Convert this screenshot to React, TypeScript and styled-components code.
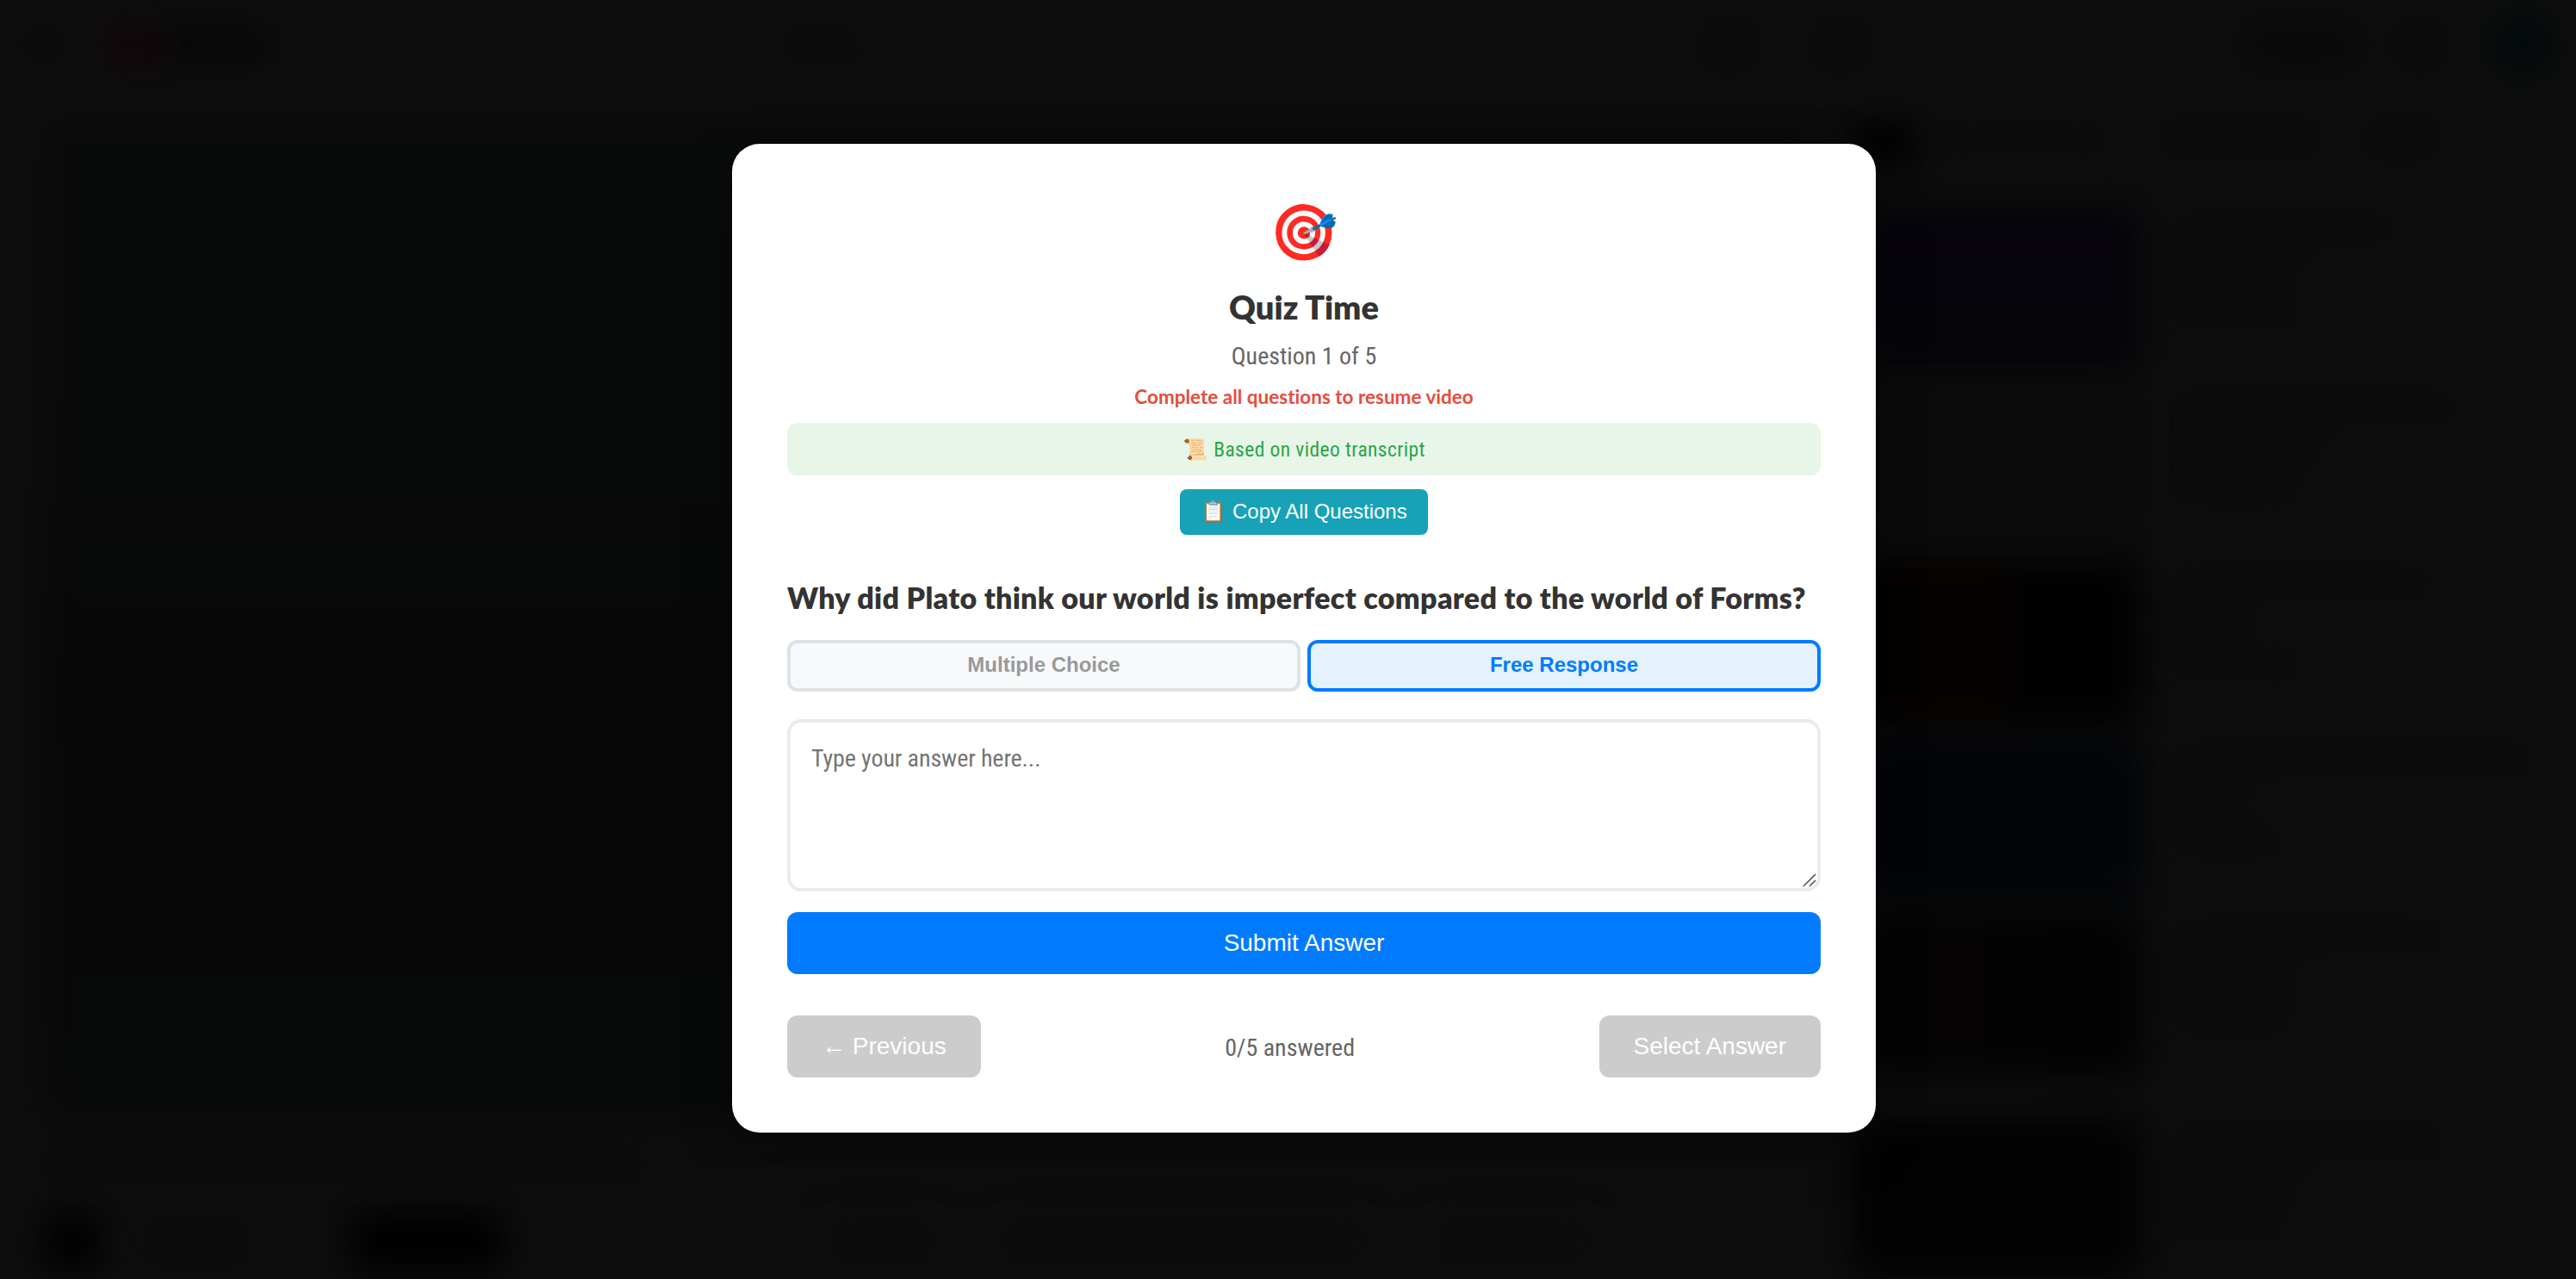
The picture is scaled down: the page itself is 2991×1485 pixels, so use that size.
import React, { useState } from 'react';
import styled, { createGlobalStyle, css } from 'styled-components';

const GlobalStyle = createGlobalStyle`
  *, *::before, *::after {
    box-sizing: border-box;
  }

  body {
    background: #0d0d0d;
    font-family: Lato, 'Open Sans', sans-serif;
    font-variant-ligatures: none;
    margin: 0;
    overflow: hidden;
  }
`;

const lightText = css`
  font-family: Roboto, 'Open Sans', sans-serif;
  font-stretch: 75%;
  font-weight: 400;
`;

const Stage = styled.div`
  display: grid;
  height: 100vh;
  overflow: hidden;
  width: 100vw;

  > * {
    grid-area: 1 / 1;
    min-height: 0;
    min-width: 0;
  }
`;

/* The dimmed video page behind the modal */

const Page = styled.div`
  display: flex;
  filter: blur(20px);
  flex-direction: column;
  overflow: hidden;
`;

const TopBar = styled.div`
  align-items: center;
  display: flex;
  flex: none;
  height: 104px;
  padding: 0 30px;
`;

const Blob = styled.div<{ $w: number; $h: number; $color: string; $left?: string; $round?: boolean }>`
  background: ${({ $color }) => $color};
  border-radius: ${({ $round }) => ($round ? '50%' : '12px')};
  flex: none;
  height: ${({ $h }) => $h}px;
  margin-left: ${({ $left }) => $left || '0'};
  width: ${({ $w }) => $w}px;
`;

const Watch = styled.div`
  display: flex;
  flex: 1;
  gap: 40px;
  padding-left: 48px;
`;

const Primary = styled.div`
  flex: none;
  width: 2062px;
`;

const Video = styled.div`
  background: linear-gradient(#090b0a 0%, #090a0a 35%, #080808 55%, #080909 100%);
  border-radius: 24px;
  height: 1160px;
  margin: 36px 0 38px;
`;

const ChannelRow = styled.div`
  align-items: center;
  display: flex;
  margin-top: 40px;
`;

const Secondary = styled.div`
  flex: 1;
  padding-top: 40px;
`;

const Chips = styled.div`
  display: flex;
  gap: 24px;
  margin-bottom: 52px;
`;

const Related = styled.div`
  display: flex;
  gap: 36px;
  margin-bottom: 16px;

  &:last-child {
    padding-top: 34px;
  }
`;

const Thumb = styled.div<{ $fill: string }>`
  background: ${({ $fill }) => $fill};
  border-radius: 16px;
  height: 189px;
  width: 336px;
`;

const Lines = styled.div`
  display: flex;
  flex-direction: column;
  gap: 24px;
  padding-top: 14px;
`;

/* Modal */

const Overlay = styled.div`
  align-items: center;
  display: flex;
  justify-content: center;
  padding: 0 0 3px 37px;
  z-index: 1;
`;

const Modal = styled.div`
  background: #fff;
  border-radius: 32px;
  box-shadow: 0 20px 60px rgba(0, 0, 0, 0.3);
  display: flex;
  flex-direction: column;
  height: 1148px;
  padding: 64px;
  width: 1328px;
`;

const Header = styled.div`
  align-items: center;
  display: flex;
  flex-direction: column;
  margin-bottom: 39px;
`;

const HeaderIcon = styled.div`
  font-size: 64px;
  height: 89px;
  line-height: 74px;
`;

const Title = styled.h2`
  color: #333;
  font-size: 38px;
  font-weight: 800;
  line-height: 72px;
  margin: 0;
`;

const Counter = styled.div`
  ${lightText}
  color: #666;
  font-size: 28px;
  line-height: 44px;
`;

const Notice = styled.div`
  color: #e74c3c;
  font-size: 22.5px;
  font-weight: 700;
  line-height: 50px;
`;

const SourceBanner = styled.div`
  background: #e8f5e9;
  border-radius: 12px;
  color: #28a745;
  font-size: 24px;
  height: 61px;
  line-height: 60px;
  margin: 5px 0 16px;
  text-align: center;
  width: 100%;
`;

const SourceText = styled.span`
  ${lightText}
  font-size: 23.5px;
  letter-spacing: 0.4px;
`;

const BaseButton = styled.button`
  border: none;
  color: #fff;
  cursor: pointer;
  font-family: 'Liberation Sans', Arial, sans-serif;
  padding: 0;
`;

const CopyButton = styled(BaseButton)`
  background: #17a2b8;
  border-radius: 8px;
  font-size: 24px;
  height: 53px;
  padding-bottom: 1px;
  width: 288px;
`;

const Question = styled.h3`
  color: #333;
  font-size: 34px;
  font-weight: 800;
  letter-spacing: 0.31px;
  line-height: 68px;
  margin: 0 0 15px;
  white-space: nowrap;
`;

const Modes = styled.div`
  display: flex;
  gap: 8px;
  margin-bottom: 32px;
`;

const ModeButton = styled(BaseButton)<{ $active: boolean }>`
  background: ${({ $active }) => ($active ? '#e3f2fd' : '#f8f9fa')};
  border: 4px solid ${({ $active }) => ($active ? '#007bff' : '#dee2e6')};
  border-radius: 12px;
  color: ${({ $active }) => ($active ? '#007bff' : '#999')};
  flex: 1;
  font-size: 24px;
  font-weight: 700;
  height: 60px;
  padding-bottom: 2px;
`;

const AnswerField = styled.div`
  display: flex;
  margin-bottom: 24px;
  position: relative;
`;

const Answer = styled.textarea`
  ${lightText}
  border: 4px solid #e9ecef;
  border-radius: 16px;
  font-size: 28px;
  height: 200px;
  letter-spacing: -0.1px;
  line-height: 40px;
  outline: none;
  padding: 22px 24px;
  resize: none;
  width: 100%;

  &::placeholder {
    color: #757575;
  }
`;

const Grip = styled.svg`
  bottom: 5px;
  position: absolute;
  right: 5px;
`;

const SubmitButton = styled(BaseButton)`
  background: #007bff;
  border-radius: 12px;
  font-size: 28px;
  height: 72px;
  margin-bottom: 48px;
`;

const Footer = styled.div`
  align-items: center;
  display: flex;
  justify-content: space-between;
`;

const NavButton = styled(BaseButton)`
  background: #ccc;
  border-radius: 12px;
  cursor: not-allowed;
  font-size: 28px;
  height: 72px;
  padding: 0 40px;
`;

const Progress = styled.div`
  ${lightText}
  color: #666;
  font-size: 28px;
  padding-top: 2px;
`;

const related = [
  { fill: 'linear-gradient(#06040b, #050409)', lines: [260, 150, 150] },
  { fill: '#0b0b0b', lines: [330, 180, 150] },
  { fill: 'linear-gradient(90deg, #010101, #060200 35%, #010101 70%)', lines: [300, 90, 150] },
  { fill: '#020408', lines: [420, 90, 130] },
  { fill: 'linear-gradient(90deg, #030303, #050303 35%, #020202)', lines: [320, 140, 140] },
  { fill: '#020202', lines: [320, 150, 130] },
];

const BackgroundPage: React.FC = () => (
  <Page>
    <TopBar>
      <Blob $w={40} $h={36} $color="#0a0a0a" />
      <Blob $w={62} $h={40} $color="#130307" $left="56px" />
      <Blob $w={115} $h={34} $color="#060606" $left="6px" />
      <Blob $w={90} $h={28} $color="#0a0a0a" $left="600px" />
      <Blob $w={46} $h={46} $color="#080808" $left="985px" $round />
      <Blob $w={46} $h={46} $color="#080808" $left="84px" $round />
      <Blob $w={130} $h={38} $color="#080808" $left="auto" />
      <Blob $w={44} $h={44} $color="#080808" $left="48px" $round />
      <Blob $w={64} $h={64} $color="#01090a" $left="68px" $round />
    </TopBar>
    <Watch>
      <Primary>
        <Video />
        <Blob $w={700} $h={28} $color="#0a0a0a" />
        <ChannelRow>
          <Blob $w={72} $h={72} $color="#000" $round />
          <Blob $w={120} $h={40} $color="#0a0a0a" $left="48px" />
          <Blob $w={176} $h={68} $color="#000" $left="120px" />
          <Blob $w={120} $h={44} $color="#0b0b0b" $left="380px" />
          <Blob $w={420} $h={44} $color="#0b0b0b" $left="80px" />
          <Blob $w={180} $h={44} $color="#0b0b0b" $left="80px" />
        </ChannelRow>
      </Primary>
      <Secondary>
        <Chips>
          <Blob $w={76} $h={44} $color="#000" />
          <Blob $w={200} $h={32} $color="#0b0b0b" />
          <Blob $w={190} $h={32} $color="#0a0a0a" $left="30px" />
          <Blob $w={80} $h={32} $color="#090909" $left="30px" />
        </Chips>
        {related.map(({ fill, lines }, i) => (
          <Related key={i}>
            <Thumb $fill={fill} />
            <Lines>
              {lines.map((w, j) => (
                <Blob key={j} $w={w} $h={24} $color="#0a0a0a" />
              ))}
            </Lines>
          </Related>
        ))}
      </Secondary>
    </Watch>
  </Page>
);

const App: React.FC = () => {
  const [mode, setMode] = useState<'choice' | 'free'>('free');

  return (
    <Stage>
      <GlobalStyle />
      <BackgroundPage />
      <Overlay>
        <Modal>
          <Header>
            <HeaderIcon>🎯</HeaderIcon>
            <Title>Quiz Time</Title>
            <Counter>Question 1 of 5</Counter>
            <Notice>Complete all questions to resume video</Notice>
            <SourceBanner>
              📜 <SourceText>Based on video transcript</SourceText>
            </SourceBanner>
            <CopyButton>📋 Copy All Questions</CopyButton>
          </Header>
          <Question>Why did Plato think our world is imperfect compared to the world of Forms?</Question>
          <Modes>
            <ModeButton $active={mode === 'choice'} onClick={() => setMode('choice')}>
              Multiple Choice
            </ModeButton>
            <ModeButton $active={mode === 'free'} onClick={() => setMode('free')}>
              Free Response
            </ModeButton>
          </Modes>
          <AnswerField>
            <Answer placeholder="Type your answer here..." />
            <Grip width="16" height="16" viewBox="0 0 16 16" fill="none" stroke="#555" strokeWidth="1.6">
              <path d="M1 15 15 1M8 15l7-7" />
            </Grip>
          </AnswerField>
          <SubmitButton>Submit Answer</SubmitButton>
          <Footer>
            <NavButton disabled>← Previous</NavButton>
            <Progress>0/5 answered</Progress>
            <NavButton disabled>Select Answer</NavButton>
          </Footer>
        </Modal>
      </Overlay>
    </Stage>
  );
};

export default App;
